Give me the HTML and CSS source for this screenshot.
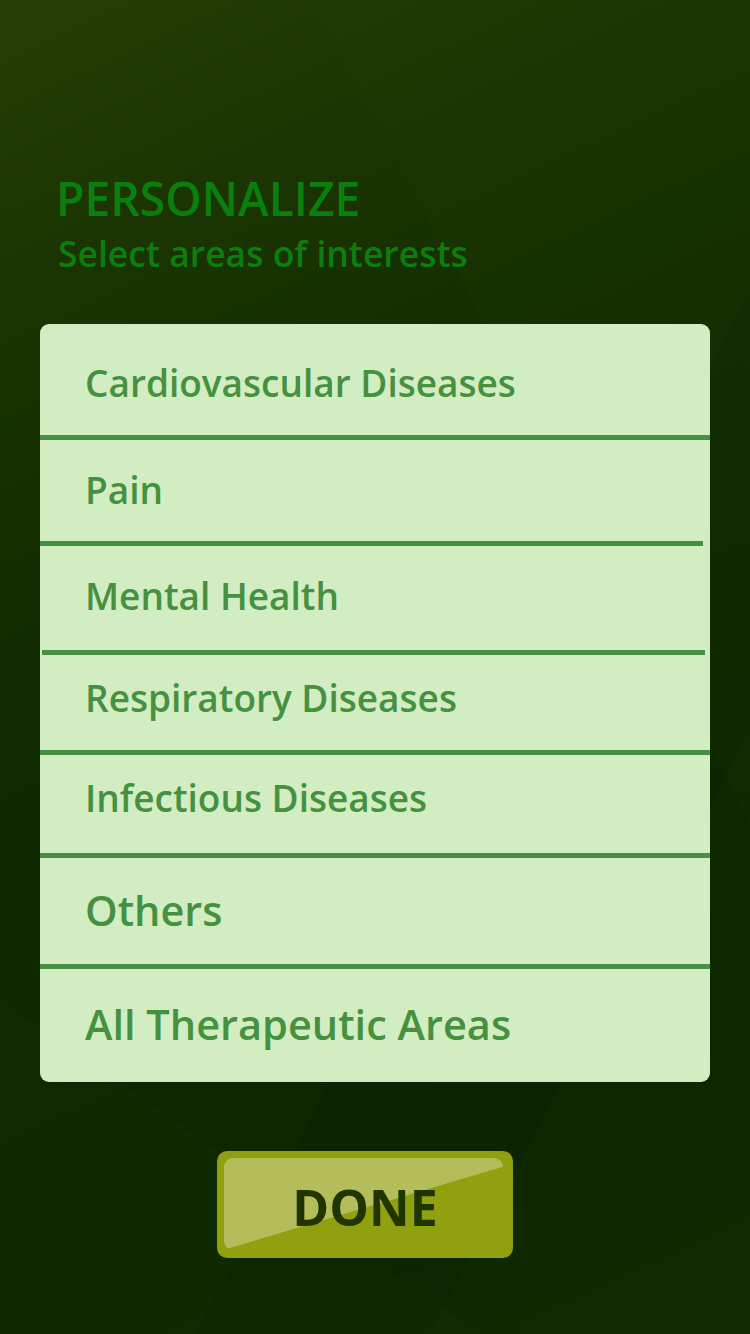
FILE: index.html
```html
<!DOCTYPE html>
<html lang="en">
<head>
<meta charset="utf-8">
<title>Personalize</title>
<link rel="stylesheet" href="styles.css">
</head>
<body>
<main class="screen">
  <header class="intro">
    <h1 class="title">PERSONALIZE</h1>
    <p class="subtitle">Select areas of interests</p>
  </header>
  <ul class="areas">
    <li class="area area--r1">Cardiovascular Diseases</li>
    <li class="sep"></li>
    <li class="area area--r2">Pain</li>
    <li class="sep sep--short-right"></li>
    <li class="area area--r3">Mental Health</li>
    <li class="sep sep--shifted"></li>
    <li class="area area--r4">Respiratory Diseases</li>
    <li class="sep"></li>
    <li class="area area--r5">Infectious Diseases</li>
    <li class="sep"></li>
    <li class="area area--r6 area--large">Others</li>
    <li class="sep"></li>
    <li class="area area--r7 area--large">All Therapeutic Areas</li>
  </ul>
  <div class="actions">
    <button class="done" type="button"><span class="done__label">DONE</span></button>
  </div>
</main>
</body>
</html>
```

FILE: styles.css
```css
* { box-sizing: border-box; }

html, body {
  margin: 0;
  padding: 0;
}

body {
  width: 750px;
  height: 1334px;
  overflow: hidden;
  font-family: "Open Sans", "Noto Sans", "DejaVu Sans", sans-serif;
  background:
    linear-gradient(118deg, rgba(255,255,255,0) 62%, rgba(0,0,0,0.07) 62%, rgba(0,0,0,0.07) 78%, rgba(255,255,255,0) 78%),
    linear-gradient(62deg, rgba(255,255,255,0) 70%, rgba(40,70,0,0.10) 70%),
    linear-gradient(35deg, rgba(40,70,0,0.10) 0%, rgba(40,70,0,0.10) 18%, rgba(255,255,255,0) 18%),
    linear-gradient(155deg, #263f04 0%, #1a3402 18%, #122c00 38%, #0e2800 60%, #0c2600 80%, #112b02 100%);
}

.screen {
  padding-top: 176px;
  display: flex;
  flex-direction: column;
}

.intro {
  padding-left: 56px;
}

.title {
  margin: 0;
  font-size: 46.3px;
  line-height: 1;
  font-weight: 600;
  color: #0b7f0c;
}

.subtitle {
  margin: 14px 0 0 2px;
  font-size: 35.5px;
  line-height: 1;
  font-weight: 600;
  color: #0c7e0c;
}

.areas {
  list-style: none;
  margin: 52px 40px 0 40px;
  padding: 0;
  width: 670px;
  background: #d2edc2;
  border-radius: 9px;
  overflow: hidden;
}

.area {
  padding-left: 45px;
  font-size: 37px;
  line-height: 1;
  font-weight: 600;
  color: #46913f;
  white-space: nowrap;
}

.area--large { font-size: 41.5px; }

.area--r1 { height: 111px; padding-top: 40px; }
.area--r2 { height: 101px; padding-top: 31px; }
.area--r3 { height: 104px; padding-top: 31px; }
.area--r4 { height: 95px;  padding-top: 24px; }
.area--r5 { height: 98px;  padding-top: 24px; }
.area--r6 { height: 106px; padding-top: 32px; }
.area--r7 { height: 113px; padding-top: 35px; }

.sep {
  height: 5px;
  background: #478f42;
}

.sep--short-right { margin-right: 7px; }
.sep--shifted { margin-left: 2px; margin-right: 5px; }

.actions {
  display: flex;
  justify-content: flex-start;
  padding-top: 69px;
  padding-left: 217px;
}

.done {
  position: relative;
  width: 296px;
  height: 107px;
  border: 0;
  padding: 0;
  margin: 0;
  border-radius: 10px;
  background: #91a00f;
  font-family: "Open Sans", "Noto Sans", sans-serif;
  cursor: pointer;
  display: flex;
  align-items: center;
  justify-content: center;
}

.done::before {
  content: "";
  position: absolute;
  left: 7px;
  top: 7px;
  width: 279px;
  height: 92px;
  background: #b5bc5a;
  border-radius: 9px;
  clip-path: polygon(0 0, 100% 0, 100% 9px, 0 100%);
}

.done__label {
  position: relative;
  font-size: 50px;
  font-weight: 700;
  line-height: 1;
  color: #1f3600;
  padding-top: 5px;
}
```
